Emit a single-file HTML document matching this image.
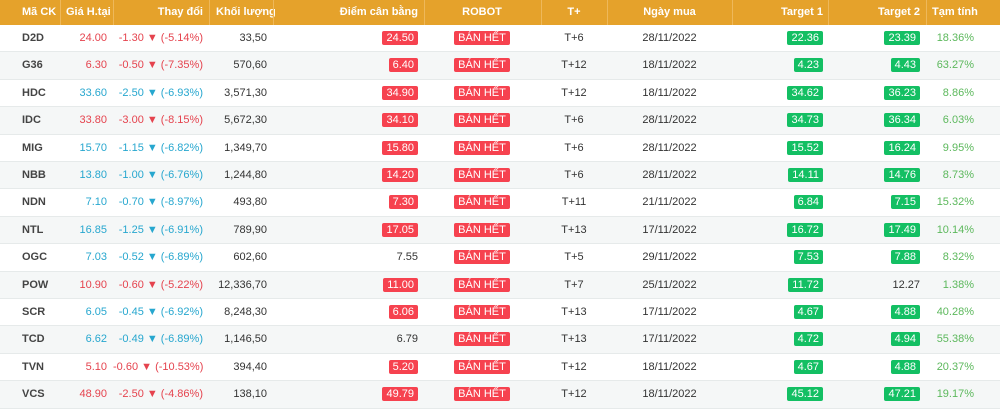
<!DOCTYPE html>
<html><head><meta charset="utf-8"><style>
body{margin:0;width:1000px;height:410px;background:#fff;font-family:"Liberation Sans",Arial,sans-serif;font-size:11px;color:#333;overflow:hidden;position:relative}
.hd{position:absolute;left:0;top:0;width:1000px;height:25px;background:#e5a22b;color:#fff;font-weight:bold}
.hd span{position:absolute;top:0;line-height:25px}
.sep{position:absolute;top:0;width:1px;height:25px;background:#eeb85a}
.r{position:absolute;left:0;width:1000px;height:27px;border-bottom:1px solid #e6eaea;box-sizing:border-box}
.r.g{background:#f5f7f7}
.r span{position:absolute;top:0;line-height:27px;white-space:nowrap}
.rt{text-align:right}
.c{text-align:center}
.b{display:inline-block;color:#fff;border-radius:2px;line-height:14px;padding:0 4px;vertical-align:middle}
.red{background:#f6424f}.grn{background:#13bf63}
.cr{color:#e5434e}.cb{color:#27a7cf}.cg{color:#5cb85c}
</style></head><body>
<div class="hd">
<span style="left:22px">Mã CK</span>
<span style="left:66px">Giá H.tại</span>
<span style="left:120px;width:83px;text-align:right">Thay đổi</span>
<span style="left:216px">Khối lượng</span>
<span style="left:300px;width:118px;text-align:right">Điểm cân bằng</span>
<span style="left:440px;width:84px;text-align:center">ROBOT</span>
<span style="left:541px;width:66px;text-align:center">T+</span>
<span style="left:607px;width:125px;text-align:center">Ngày mua</span>
<span style="left:740px;width:83px;text-align:right">Target 1</span>
<span style="left:830px;width:90px;text-align:right">Target 2</span>
<span style="left:932px">Tạm tính</span>
<div class="sep" style="left:60px"></div><div class="sep" style="left:113px"></div><div class="sep" style="left:209px"></div><div class="sep" style="left:273px"></div><div class="sep" style="left:424px"></div><div class="sep" style="left:541px"></div><div class="sep" style="left:607px"></div><div class="sep" style="left:732px"></div><div class="sep" style="left:828px"></div><div class="sep" style="left:926px"></div>
</div>
<div id="rows"></div>
<script>
const d=[
["D2D","24.00","r","-1.30","-5.14%","33,50","24.50",1,"T+6","28/11/2022","22.36",1,"23.39",1,"18.36%"],
["G36","6.30","r","-0.50","-7.35%","570,60","6.40",1,"T+12","18/11/2022","4.23",1,"4.43",1,"63.27%"],
["HDC","33.60","b","-2.50","-6.93%","3,571,30","34.90",1,"T+12","18/11/2022","34.62",1,"36.23",1,"8.86%"],
["IDC","33.80","r","-3.00","-8.15%","5,672,30","34.10",1,"T+6","28/11/2022","34.73",1,"36.34",1,"6.03%"],
["MIG","15.70","b","-1.15","-6.82%","1,349,70","15.80",1,"T+6","28/11/2022","15.52",1,"16.24",1,"9.95%"],
["NBB","13.80","b","-1.00","-6.76%","1,244,80","14.20",1,"T+6","28/11/2022","14.11",1,"14.76",1,"8.73%"],
["NDN","7.10","b","-0.70","-8.97%","493,80","7.30",1,"T+11","21/11/2022","6.84",1,"7.15",1,"15.32%"],
["NTL","16.85","b","-1.25","-6.91%","789,90","17.05",1,"T+13","17/11/2022","16.72",1,"17.49",1,"10.14%"],
["OGC","7.03","b","-0.52","-6.89%","602,60","7.55",0,"T+5","29/11/2022","7.53",1,"7.88",1,"8.32%"],
["POW","10.90","r","-0.60","-5.22%","12,336,70","11.00",1,"T+7","25/11/2022","11.72",1,"12.27",0,"1.38%"],
["SCR","6.05","b","-0.45","-6.92%","8,248,30","6.06",1,"T+13","17/11/2022","4.67",1,"4.88",1,"40.28%"],
["TCD","6.62","b","-0.49","-6.89%","1,146,50","6.79",0,"T+13","17/11/2022","4.72",1,"4.94",1,"55.38%"],
["TVN","5.10","r","-0.60","-10.53%","394,40","5.20",1,"T+12","18/11/2022","4.67",1,"4.88",1,"20.37%"],
["VCS","48.90","r","-2.50","-4.86%","138,10","49.79",1,"T+12","18/11/2022","45.12",1,"47.21",1,"19.17%"]];
let h="";
d.forEach((x,i)=>{
const top=25+27.4*i;const c=x[2]=="r"?"cr":"cb";
h+=`<div class="r${i%2?" g":""}" style="top:${top}px;height:27.4px">
<span style="left:22px;font-weight:bold;color:#444">${x[0]}</span>
<span class="rt ${c}" style="left:60px;width:47px">${x[1]}</span>
<span class="rt ${c}" style="left:113px;width:90px">${x[3]} ▼ (${x[4]})</span>
<span class="rt" style="left:209px;width:58px">${x[5]}</span>
<span class="rt" style="left:300px;width:118px">${x[7]?`<i class="b red" style="font-style:normal">${x[6]}</i>`:x[6]}</span>
<span class="c" style="left:440px;width:84px"><i class="b red" style="font-style:normal">BÁN HẾT</i></span>
<span class="c" style="left:541px;width:66px">${x[8]}</span>
<span class="c" style="left:607px;width:125px">${x[9]}</span>
<span class="rt" style="left:740px;width:83px">${x[11]?`<i class="b grn" style="font-style:normal">${x[10]}</i>`:x[10]}</span>
<span class="rt" style="left:830px;width:90px">${x[13]?`<i class="b grn" style="font-style:normal">${x[12]}</i>`:x[12]}</span>
<span class="rt cg" style="left:926px;width:48px">${x[14]}</span>
</div>`;});
document.getElementById("rows").innerHTML=h;
</script>
</body></html>
